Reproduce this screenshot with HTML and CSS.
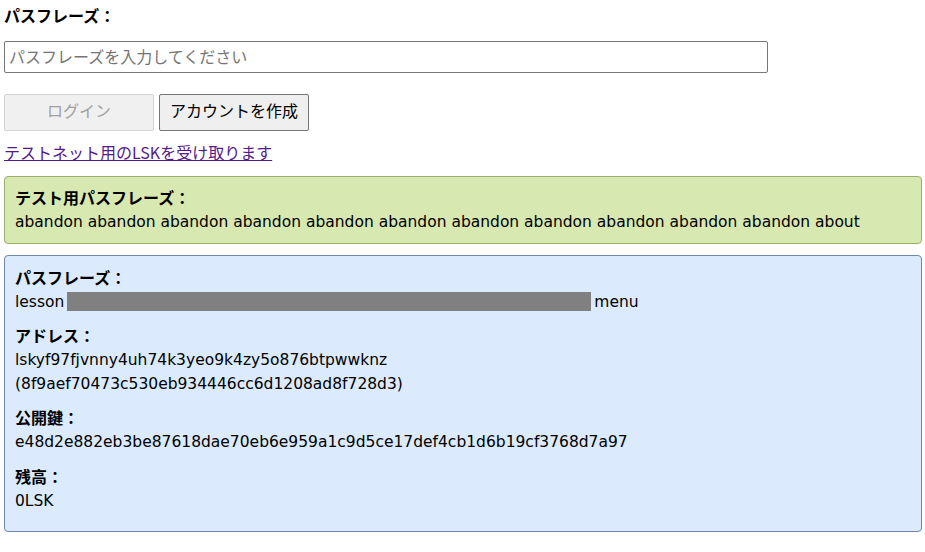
FILE: index.html
```
<!DOCTYPE html>
<html lang="ja"><head><meta charset="utf-8"><link rel="stylesheet" href="styles.css"></head><body>
<div class="page">
  <label class="field-label" for="pass">パスフレーズ：</label>
  <input id="pass" class="pass-input" type="text" placeholder="パスフレーズを入力してください">
  <div class="actions">
    <button class="btn" disabled>ログイン</button>
    <button class="btn">アカウントを作成</button>
  </div>
  <a class="faucet" href="#">テストネット用のLSKを受け取ります</a>
  <div class="box box-test">
    <div class="k">テスト用パスフレーズ：</div>
    <div class="v lat">abandon abandon abandon abandon abandon abandon abandon abandon abandon abandon abandon about</div>
  </div>
  <div class="box box-info">
    <div class="sec">
      <div class="k">パスフレーズ：</div>
      <div class="v lat">lesson<span class="mask"></span>menu</div>
    </div>
    <div class="sec">
      <div class="k">アドレス：</div>
      <div class="v lat">lskyf97fjvnny4uh74k3yeo9k4zy5o876btpwwknz</div>
      <div class="v lat">(8f9aef70473c530eb934446cc6d1208ad8f728d3)</div>
    </div>
    <div class="sec">
      <div class="k">公開鍵：</div>
      <div class="v lat">e48d2e882eb3be87618dae70eb6e959a1c9d5ce17def4cb1d6b19cf3768d7a97</div>
    </div>
    <div class="sec">
      <div class="k">残高：</div>
      <div class="v lat">0LSK</div>
    </div>
  </div>
</div>
</body></html>
```
FILE: styles.css
```
html,body{margin:0;background:#fff}
body{font-family:"DejaVu Sans","Noto Sans CJK JP",sans-serif;font-size:16px;line-height:24px;color:#000}
.page{padding:6px 3px 0 4px;display:flex;flex-direction:column;align-items:flex-start}
.field-label{font-weight:bold;display:block;margin-top:-1px}
.pass-input{margin-top:12px;width:764px;height:32px;box-sizing:border-box;border:1px solid #767676;border-radius:2px;padding:0 4px 3px;font:16px "Noto Sans CJK JP",sans-serif;color:#000}
.pass-input::placeholder{color:#757575}
.actions{margin-top:21px;display:flex;gap:5px}
.btn{width:150px;height:37px;box-sizing:border-box;font:16px "Noto Sans CJK JP",sans-serif;background:#efefef;border:1px solid #767676;border-radius:2px;color:#000;padding:0 0 5px}
.btn:disabled{color:#a0a0a0;border-color:#d3d3d3;background:#f0f0f0}
.faucet{margin-top:9px;color:#551a8b;text-decoration:underline;font-family:"Noto Sans CJK JP",sans-serif;font-size:16px;line-height:24px}
.box{align-self:stretch;border-radius:4px;border:1px solid}
.box-test{margin-top:12px;background:#d8e8b1;border-color:#9aae6c;padding:8px 10px 9px}
.box-info{margin-top:11px;background:#dbebfd;border-color:#6f86ae;padding:9px 10px 18px}
.k{font-weight:bold;font-family:"Noto Sans CJK JP",sans-serif;margin-bottom:1px}
.lat{font-size:15.5px}
.sec{margin-bottom:9px}
.sec:nth-child(3){margin-bottom:10px}
.sec:last-child{margin-bottom:0}
.mask{display:inline-block;width:524px;height:19px;margin:0 3px;background:#808080;vertical-align:-4px}
```
